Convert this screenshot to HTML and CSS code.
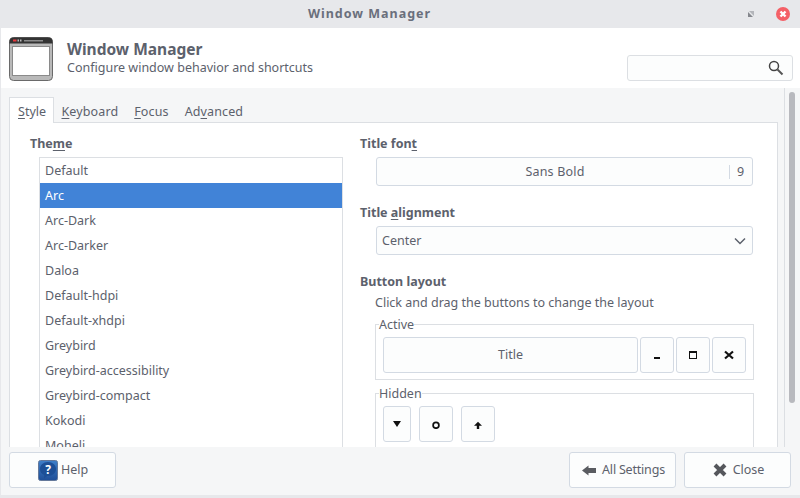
FILE: index.html
```html
<!DOCTYPE html>
<html lang="en">
<head>
    <meta charset="UTF-8">
    <title>Window Manager</title>
    <link rel="stylesheet" href="styles.css">
</head>
<body>
    <div class="window">
        <div class="titlebar">
            <span class="titlebar-text">Window Manager</span>
            <svg class="wm-restore" width="8" height="8" viewBox="0 0 8 8">
                <path d="M2 1h5v5z" fill="#b3b5ba"/>
                <path d="M1 2l5 5H1z" fill="#85878d"/>
            </svg>
            <svg class="wm-close" width="14" height="14" viewBox="0 0 14 14">
                <circle cx="7" cy="7" r="7" fill="#f46067"/>
                <path d="M4.500 4.500l5 5M9.500 4.500l-5 5" stroke="#fff" stroke-width="2.400"/>
            </svg>
        </div>

        <div class="header">
            <svg class="app-icon" width="44" height="44" viewBox="0 0 44 44">
                <rect x="0.500" y="0.500" width="43" height="43" rx="4" fill="#b9b9b9" stroke="#6a6a6a"/>
                <path d="M0.500 5a4 4 0 0 1 4-4.500h35a4 4 0 0 1 4 4.500v1.500H0.500z" fill="#333"/>
                <rect x="4" y="2.500" width="3.500" height="2" fill="#e8383d"/>
                <rect x="8.500" y="2.500" width="1.500" height="2" fill="#bbb"/>
                <rect x="11" y="2.500" width="1.500" height="2" fill="#bbb"/>
                <rect x="15" y="3" width="19" height="1.500" fill="#8c8c8c"/>
                <rect x="3.500" y="9.500" width="37" height="29" fill="#fff" stroke="#8a8a8a"/>
            </svg>
            <div class="header-text">
                <div class="header-title">Window Manager</div>
                <div class="header-sub">Configure window behavior and shortcuts</div>
            </div>
            <div class="search">
                <svg width="16" height="16" viewBox="0 0 16 16">
                    <circle cx="6" cy="6" r="4.500" fill="none" stroke="#444" stroke-width="1.500"/>
                    <path d="M9.500 9.500l5 5" stroke="#555" stroke-width="2"/>
                </svg>
            </div>
        </div>

        <div class="content">
            <div class="pane">
                <div class="tabs">
                    <div class="tab tab-active"><u>S</u>tyle</div>
                    <div class="tab"><u>K</u>eyboard</div>
                    <div class="tab"><u>F</u>ocus</div>
                    <div class="tab">Ad<u>v</u>anced</div>
                </div>
                <div class="panel">
                    <div class="col-theme">
                        <div class="label">The<u>m</u>e</div>
                        <div class="theme-list">
                            <div class="row">Default</div>
                            <div class="row row-selected">Arc</div>
                            <div class="row">Arc-Dark</div>
                            <div class="row">Arc-Darker</div>
                            <div class="row">Daloa</div>
                            <div class="row">Default-hdpi</div>
                            <div class="row">Default-xhdpi</div>
                            <div class="row">Greybird</div>
                            <div class="row">Greybird-accessibility</div>
                            <div class="row">Greybird-compact</div>
                            <div class="row">Kokodi</div>
                            <div class="row">Moheli</div>
                        </div>
                    </div>
                    <div class="col-options">
                        <div class="label">Title fon<u>t</u></div>
                        <div class="field font-field">
                            <span class="font-name">Sans Bold</span>
                            <span class="font-size">9</span>
                        </div>
                        <div class="label label-gap">Title <u>a</u>lignment</div>
                        <div class="field combo">
                            <span>Center</span>
                            <svg width="12" height="8" viewBox="0 0 12 8">
                                <path d="M1 1.500l5 5 5-5" fill="none" stroke="#5c616c" stroke-width="1.500"/>
                            </svg>
                        </div>
                        <div class="label label-gap">Button layout</div>
                        <div class="hint">Click and drag the buttons to change the layout</div>
                        <fieldset class="frame frame-active">
                            <legend>Active</legend>
                            <div class="slot slot-title">Title</div>
                            <div class="slot">
                                <svg width="10" height="10" viewBox="0 0 10 10"><rect x="2" y="7" width="6" height="2" fill="#111"/></svg>
                            </div>
                            <div class="slot">
                                <svg width="10" height="10" viewBox="0 0 10 10"><rect x="1.500" y="1.500" width="7" height="7" fill="none" stroke="#111"/><rect x="1" y="1" width="8" height="2" fill="#111"/></svg>
                            </div>
                            <div class="slot">
                                <svg width="10" height="10" viewBox="0 0 10 10"><path d="M1 1.500l8 7M9 1.500l-8 7" stroke="#111" stroke-width="2.200"/></svg>
                            </div>
                        </fieldset>
                        <fieldset class="frame frame-hidden">
                            <legend>Hidden</legend>
                            <div class="slot slot-narrow">
                                <svg width="10" height="10" viewBox="0 0 10 10"><path d="M1 2h8L5 8z" fill="#111"/></svg>
                            </div>
                            <div class="slot slot-gap">
                                <svg width="10" height="10" viewBox="0 0 10 10"><circle cx="5" cy="6.300" r="2.900" fill="none" stroke="#111" stroke-width="1.700"/></svg>
                            </div>
                            <div class="slot">
                                <svg width="10" height="10" viewBox="0 0 10 10"><path d="M5 2.700l4 4H6.200V10H3.800V6.700H1z" fill="#111"/></svg>
                            </div>
                        </fieldset>
                    </div>
                </div>
            </div>
            <div class="scrollbar"><div class="thumb"></div></div>
        </div>

        <div class="footer">
            <div class="btn btn-help">
                <svg width="20" height="21" viewBox="0 0 20 21">
                    <defs>
                        <linearGradient id="helpBg" x1="0" y1="0" x2="0" y2="1">
                            <stop offset="0" stop-color="#3f7fc9"/>
                            <stop offset="1" stop-color="#1f4f98"/>
                        </linearGradient>
                    </defs>
                    <rect x="0.500" y="0.500" width="19" height="20" rx="2" fill="url(#helpBg)" stroke="#64789a"/>
                    <path d="M10 2c4.500 0 8 2.900 8 7s-3.500 7-8 7H9l-3 2.500.3-3.500C3.500 14 2 11.700 2 9c0-4.100 3.500-7 8-7z" fill="#1d4f96"/>
                    <text class="help-mark" x="10" y="13.500" text-anchor="middle">?</text>
                </svg>
                <span>Help</span>
            </div>
            <div class="footer-right">
                <div class="btn btn-icon-wide">
                    <svg width="14" height="11" viewBox="0 0 14 11"><path d="M0 5.500L6.500.5V3H14v5H6.500v2.500z" fill="#5a5c61"/></svg>
                    <span class="settings-text">All Settings</span>
                </div>
                <div class="btn btn-icon-wide">
                    <svg width="14" height="14" viewBox="0 0 14 14"><path d="M2 2l10 10M12 2L2 12" stroke="#55575c" stroke-width="4"/></svg>
                    <span>Close</span>
                </div>
            </div>
        </div>
    </div>
</body>
</html>
```

FILE: styles.css
```css
* {
    margin: 0;
    padding: 0;
    box-sizing: border-box;
}

body {
    font-family: "Noto Sans", sans-serif;
    font-size: 12.500px;
    color: #5c616c;
    background: #e7e8eb;
    overflow: hidden;
}

u {
    text-underline-offset: 2px;
}

.window {
    width: 800px;
    height: 498px;
    display: flex;
    flex-direction: column;
    padding: 0 0 3px 1px;
    background: #e7e8eb;
}

.titlebar {
    height: 28px;
    flex: none;
    display: flex;
    align-items: center;
    justify-content: center;
    padding: 0 62px 1px 0;
    position: relative;
}

.titlebar-text {
    font-size: 12.500px;
    font-weight: 700;
    letter-spacing: 1px;
    color: #6a6f7c;
}

.wm-restore {
    position: absolute;
    left: 746px;
    top: 10px;
}

.wm-close {
    position: absolute;
    left: 775px;
    top: 7px;
}

.header {
    height: 60px;
    flex: none;
    background: #fff;
    display: flex;
    align-items: center;
    padding: 0 7px 0 8px;
}

.app-icon {
    flex: none;
    margin-top: 1px;
}

.header-text {
    margin-left: 14px;
    flex: 1;
    line-height: 17px;
}

.header-title {
    font-size: 15.500px;
    font-weight: 700;
    line-height: 19px;
}

.header-sub {
    font-size: 12.500px;
}

.search {
    width: 166px;
    height: 26px;
    margin-top: 20px;
    border: 1px solid #dcdfe3;
    border-radius: 3px;
    background: #fcfdfd;
    display: flex;
    align-items: center;
    justify-content: flex-end;
    padding-right: 8px;
}

.content {
    flex: 1;
    min-height: 0;
    background: #f5f6f7;
    display: flex;
    overflow: hidden;
}

.pane {
    width: 777px;
    padding: 9px 0 0 8px;
    flex: none;
}

.tabs {
    display: flex;
    height: 25px;
    letter-spacing: 0.12px;
}

.tab {
    padding: 4px 8.500px 0 7.500px;
    line-height: 21px;
}

.tab-active {
    width: 45px;
    background: #fff;
    border: 1px solid #dcdfe3;
    border-bottom: none;
    padding: 3px 0 0 8px;
    position: relative;
    z-index: 1;
    height: 26px;
    letter-spacing: 0;
}

.panel {
    background: #fff;
    border: 1px solid #dcdfe3;
    height: 400px;
    display: flex;
    padding-top: 10px;
}

.col-theme {
    width: 350px;
    flex: none;
    padding-left: 20px;
}

.label {
    font-weight: 700;
    line-height: 22px;
    font-size: 12.500px;
}

.label-gap {
    margin-top: 16px;
}

.theme-list {
    margin: 2px 0 0 9px;
    width: 304px;
    border: 1px solid #dcdfe3;
    height: 340px;
    overflow: hidden;
}

.row {
    height: 25px;
    line-height: 25px;
    padding-left: 5px;
}

.row-selected {
    background: #4183d7;
    color: #fff;
}

.col-options {
    flex: 1;
}

.field {
    margin: 2px 0 0 16px;
    width: 377px;
    height: 29px;
    border: 1px solid #d3dae3;
    border-radius: 3px;
    background: #fcfdfd;
    display: flex;
    align-items: center;
}

.font-name {
    flex: 1;
    text-align: center;
    padding-left: 4px;
    letter-spacing: 0.2px;
}

.font-size {
    width: 23px;
    line-height: 14px;
    border-left: 1px solid #d3dae3;
    text-align: center;
    padding-right: 1px;
}

.combo {
    justify-content: space-between;
    padding: 0 6px 0 5px;
}

.hint {
    margin: 0 0 0 15px;
    line-height: 20px;
}

.frame {
    margin-left: 15px;
    width: 379px;
    border: 1px solid #dcdfe3;
    display: flex;
    padding: 5px 7px 6px;
    gap: 2px;
}

.frame legend {
    margin-left: -4px;
    line-height: 15px;
    padding: 0;
}

.frame-active {
    margin-top: 4px;
    height: 63px;
}

.frame-hidden {
    margin-top: 6px;
    height: 90px;
}

.slot {
    width: 34px;
    height: 36px;
    flex: none;
    border: 1px solid #d3dae3;
    border-radius: 3px;
    background: #fcfdfd;
    display: flex;
    align-items: center;
    justify-content: center;
}

.slot-title {
    width: 255px;
    padding-bottom: 1px;
}

.slot-narrow {
    width: 28px;
}

.slot-gap {
    margin: 0 6px;
}

.scrollbar {
    flex: none;
    width: 15px;
    margin-left: 6px;
    padding: 4px 0 0 4px;
    border-left: 1px solid #dcdfe3;
}

.thumb {
    width: 6px;
    height: 311px;
    background: #b8b9be;
    border-radius: 3px;
}

.footer {
    height: 48px;
    flex: none;
    background: #f5f6f7;
    display: flex;
    justify-content: space-between;
    padding: 5px 9px 0 8px;
}

.footer-right {
    display: flex;
    gap: 8px;
}

.btn {
    width: 107px;
    height: 36px;
    border: 1px solid #d3dae3;
    border-radius: 3px;
    background: #fcfdfd;
    display: flex;
    align-items: center;
    justify-content: center;
    gap: 3px;
}

.btn span {
    margin-top: -2px;
}

.btn-help {
    padding-left: 1px;
}

.btn-icon-wide {
    gap: 6px;
    padding-left: 2px;
}

.settings-text {
    letter-spacing: -0.2px;
}

.help-mark {
    font-family: "Noto Sans", sans-serif;
    font-size: 12px;
    font-weight: 700;
    fill: #fff;
}
```
